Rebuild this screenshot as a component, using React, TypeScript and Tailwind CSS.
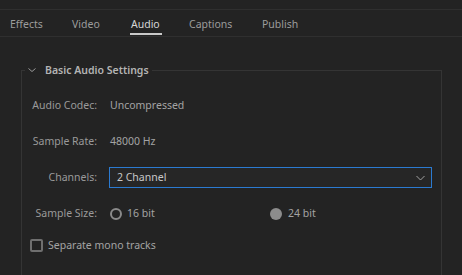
import React, { useState } from 'react';

const tabs = [
  { name: 'Effects', w: 'w-[62px]' },
  { name: 'Video', w: 'w-[59px]' },
  { name: 'Audio', w: 'w-[58px]' },
  { name: 'Captions', w: 'w-[73px]' },
  { name: 'Publish', w: 'w-[60px]' },
];

const Row: React.FC<{ label: string; children: React.ReactNode }> = ({ label, children }) => (
  <div className="flex items-center h-[36px]">
    <div className="w-[88px] text-right text-[#9a9a9a] pr-[13px] shrink-0 whitespace-nowrap">{label}</div>
    {children}
  </div>
);

export default function App() {
  const [size, setSize] = useState<'16' | '24'>('24');
  const [mono, setMono] = useState(false);

  return (
    <div
      className="w-[462px] h-[275px] overflow-hidden bg-[#232323] text-[10.5px] text-[#a3a3a3]"
      style={{ fontFamily: '"Noto Sans", "Open Sans", sans-serif' }}
    >
      <div className="h-[10px] border-b border-[#2f2f2f]" />
      <div className="flex h-[27px] border-b border-[#2f2f2f] pl-[10px]">
        {tabs.map((t) => (
          <div key={t.name} className={'flex h-full pt-[4px] ' + t.w}>
            <div
              className={
                'relative flex items-center h-full ' +
                (t.name === 'Audio' ? 'text-[#d6d6d6]' : 'text-[#9c9c9c]')
              }
            >
              {t.name}
              {t.name === 'Audio' && (
                <span className="absolute left-[-1px] right-[-2px] top-[19px] h-[2px] bg-[#c9c9c9]" />
              )}
            </div>
          </div>
        ))}
      </div>

      <fieldset className="ml-[21px] mr-[20px] mt-[26px] h-[300px] border border-[#343434]">
        <legend className="ml-[3px] px-[3px] flex items-center gap-[9px] text-[#b4b4b4] font-semibold">
          <svg width="8" height="6" viewBox="0 0 8 6" className="mt-[-2px]">
            <path d="M0.5 1.5 L4 4.5 L7.5 1.5" fill="none" stroke="#9a9a9a" strokeWidth="1" />
          </svg>
          <span>Basic Audio Settings</span>
        </legend>

        <div className="pt-[9px]">
          <Row label="Audio Codec:">
            <span className="text-[#a3a3a3]">Uncompressed</span>
          </Row>
          <Row label="Sample Rate:">
            <span className="text-[#a3a3a3]">48000 Hz</span>
          </Row>
          <Row label="Channels:">
            <div className="flex items-center justify-between w-[323px] h-[21px] border border-[#2b7ad0] bg-[#262626] pl-[7px] pr-[6px] ml-[-1px] text-[#c8c8c8]">
              <span>2 Channel</span>
              <svg width="9" height="6" viewBox="0 0 9 6">
                <path d="M0.5 1 L4.5 5 L8.5 1" fill="none" stroke="#a0a0a0" strokeWidth="1" />
              </svg>
            </div>
          </Row>
          <Row label="Sample Size:">
            <button className="flex items-center gap-[5px] w-[160px]" onClick={() => setSize('16')}>
              <span
                className={
                  'w-[12px] h-[12px] rounded-full ' +
                  (size === '16' ? 'bg-[#8c8c8c]' : 'border-2 border-[#8a8a8a]')
                }
              />
              <span>16 bit</span>
            </button>
            <button className="flex items-center gap-[6px]" onClick={() => setSize('24')}>
              <span
                className={
                  'w-[12px] h-[12px] rounded-full ' +
                  (size === '24' ? 'bg-[#8c8c8c]' : 'border-2 border-[#8a8a8a]')
                }
              />
              <span>24 bit</span>
            </button>
          </Row>
          <button
            className="flex items-center gap-[5px] h-[28px] ml-[8px]"
            onClick={() => setMono(!mono)}
          >
            <span
              className={
                'w-[13px] h-[13px] rounded-[2px] border-2 border-[#6f6f6f] ' +
                (mono ? 'bg-[#6f6f6f]' : '')
              }
            />
            <span>Separate mono tracks</span>
          </button>
        </div>
      </fieldset>
    </div>
  );
}
